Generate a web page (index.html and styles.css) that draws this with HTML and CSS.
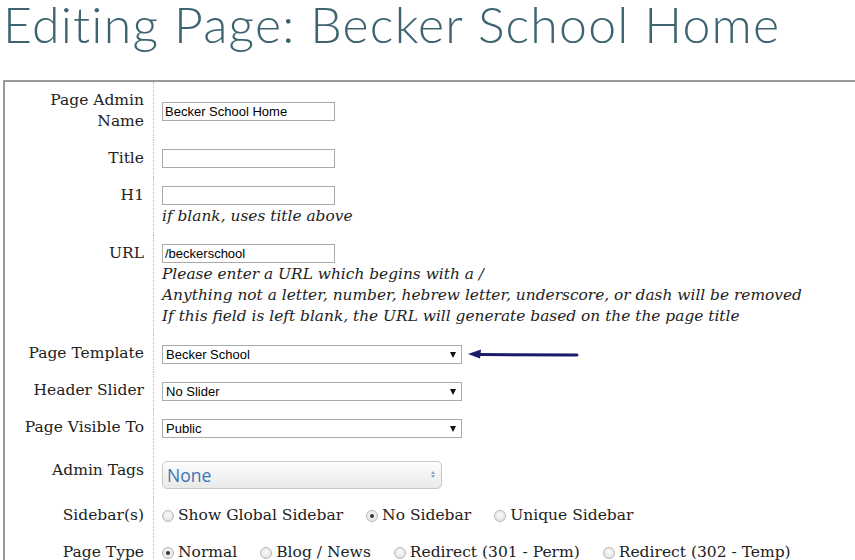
FILE: index.html
```html
<!DOCTYPE html>
<html lang="en">
<head>
<meta charset="utf-8">
<title>Editing Page: Becker School Home</title>
<link rel="stylesheet" href="styles.css">
</head>
<body>
<h1 class="page-title">Editing Page: Becker School Home</h1>
<div class="form-table">
  <div class="label">Page Admin<br>Name</div>
  <div class="field field-center"><input class="text-input" type="text" value="Becker School Home"></div>

  <div class="label">Title</div>
  <div class="field"><input class="text-input" type="text" value=""></div>

  <div class="label">H1</div>
  <div class="field"><input class="text-input" type="text" value=""><div class="hint">if blank, uses title above</div></div>

  <div class="label">URL</div>
  <div class="field"><input class="text-input" type="text" value="/beckerschool">
    <div class="hint">Please enter a URL which begins with a /</div>
    <div class="hint">Anything not a letter, number, hebrew letter, underscore, or dash will be removed</div>
    <div class="hint">If this field is left blank, the URL will generate based on the the page title</div>
  </div>

  <div class="label">Page Template</div>
  <div class="field"><span class="select-wrap"><select class="select"><option>Becker School</option></select></span><svg class="pointer" width="112" height="12" viewBox="0 0 112 12"><path d="M12 6.5 L110 7" stroke="#1b1b6b" stroke-width="3" stroke-linecap="round"/><path d="M1 6 L14 1.5 L13 10.5 Z" fill="#1b1b6b"/></svg></div>

  <div class="label">Header Slider</div>
  <div class="field"><span class="select-wrap"><select class="select"><option>No Slider</option></select></span></div>

  <div class="label">Page Visible To</div>
  <div class="field"><span class="select-wrap"><select class="select"><option>Public</option></select></span></div>

  <div class="label label-tags">Admin Tags</div>
  <div class="field field-tags"><span class="tags-wrap"><select class="tags-select"><option>None</option></select></span></div>

  <div class="label">Sidebar(s)</div>
  <div class="field radios">
    <label class="radio"><span class="dot"></span>Show Global Sidebar</label>
    <label class="radio"><span class="dot checked"></span>No Sidebar</label>
    <label class="radio"><span class="dot"></span>Unique Sidebar</label>
  </div>

  <div class="label">Page Type</div>
  <div class="field radios">
    <label class="radio"><span class="dot checked"></span>Normal</label>
    <label class="radio"><span class="dot"></span>Blog / News</label>
    <label class="radio"><span class="dot"></span>Redirect (301 - Perm)</label>
    <label class="radio"><span class="dot"></span>Redirect (302 - Temp)</label>
  </div>
</div>
</body>
</html>
```

FILE: styles.css
```css
html, body {
  margin: 0;
  padding: 0;
  overflow: hidden;
  background: #fff;
}
body {
  padding-left: 3px;
  font-family: "DejaVu Serif", serif;
  color: #222;
}
.page-title {
  margin: 0;
  font-family: Lato, "Open Sans", sans-serif;
  font-weight: 300;
  font-size: 50px;
  letter-spacing: 1.2px;
  line-height: 48px;
  color: #3d6470;
  white-space: nowrap;
}
.form-table {
  margin-top: 32px;
  width: 960px;
  border: 2px solid #999;
  display: grid;
  grid-template-columns: 148px 1fr;
}
.label {
  padding: 8px 9px 8px 0;
  text-align: right;
  font-size: 15.5px;
  line-height: 21px;
  color: #222;
}
.label-tags {
  padding-top: 14px;
}
.field {
  border-left: 1px dotted #bbb;
  padding: 8px 0 8px 8px;
  font-size: 15.5px;
  line-height: 21px;
}
.field-center {
  display: flex;
  align-items: center;
}
.field-tags {
  padding-top: 15px;
}
.text-input {
  display: block;
  box-sizing: border-box;
  width: 173px;
  height: 19px;
  margin: 1px 0;
  padding: 0 2px;
  border: 1px solid #aaa;
  font-family: "Liberation Sans", Arial, sans-serif;
  font-size: 13px;
  color: #000;
  background: #fff;
}
.hint {
  font-style: italic;
  font-size: 15.4px;
  line-height: 21px;
  color: #222;
}
.select-wrap {
  position: relative;
  display: inline-block;
  vertical-align: middle;
}
.select-wrap::after {
  content: "";
  position: absolute;
  right: 6px;
  top: 7px;
  border-left: 3.5px solid transparent;
  border-right: 3.5px solid transparent;
  border-top: 6px solid #111;
  pointer-events: none;
}
.select {
  -webkit-appearance: none;
  appearance: none;
  display: block;
  box-sizing: border-box;
  width: 300px;
  height: 19px;
  margin: 0;
  padding: 0 3px;
  border: 1px solid #aaa;
  border-radius: 0;
  background: #fff;
  font-family: "Liberation Sans", Arial, sans-serif;
  font-size: 13px;
  color: #000;
  outline: none;
}
.pointer {
  display: inline-block;
  vertical-align: middle;
  margin-left: 5px;
}
.tags-wrap {
  position: relative;
  display: block;
  width: 280px;
}
.tags-wrap::before,
.tags-wrap::after {
  content: "";
  position: absolute;
  right: 7px;
  border-left: 2.5px solid transparent;
  border-right: 2.5px solid transparent;
  pointer-events: none;
}
.tags-wrap::before {
  top: 10px;
  border-bottom: 3px solid #8ba6c4;
}
.tags-wrap::after {
  top: 14px;
  border-top: 3px solid #8ba6c4;
}
.tags-select {
  -webkit-appearance: none;
  appearance: none;
  display: block;
  box-sizing: border-box;
  width: 280px;
  height: 28px;
  margin: 0;
  padding: 0 4px;
  border: 1px solid #c8c8c8;
  border-radius: 5px;
  background: linear-gradient(#fdfdfd, #e9e9e9);
  font-family: "Open Sans", Lato, sans-serif;
  font-size: 17.5px;
  color: #3a74b4;
  outline: none;
}
.radios {
  display: flex;
  align-items: center;
  gap: 23px;
  white-space: nowrap;
}
.radio {
  display: inline-flex;
  align-items: center;
}
.dot {
  box-sizing: border-box;
  width: 12px;
  height: 12px;
  margin-right: 4px;
  border-radius: 50%;
  border: 1px solid #b9b9b9;
  background: radial-gradient(circle at 50% 40%, #fafafa, #dcdcdc);
  position: relative;
}
.dot.checked::after {
  content: "";
  position: absolute;
  left: 3px;
  top: 3px;
  width: 4px;
  height: 4px;
  border-radius: 50%;
  background: #333;
}
```
